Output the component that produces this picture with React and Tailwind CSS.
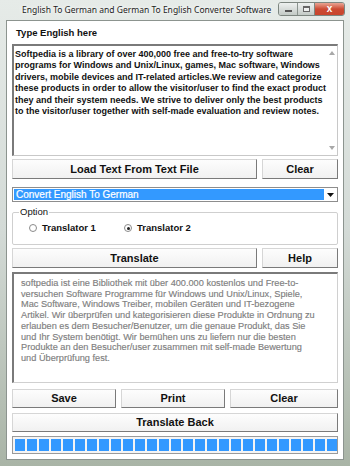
import React from 'react';

const inputLines = [
  'Softpedia is a library of over 400,000 free and free-to-try software',
  'programs for Windows and Unix/Linux, games, Mac software, Windows',
  'drivers, mobile devices and IT-related articles.We review and categorize',
  'these products in order to allow the visitor/user to find the exact product',
  'they and their system needs. We strive to deliver only the best products',
  'to the visitor/user together with self-made evaluation and review notes.',
];

const outputLines = [
  'softpedia ist eine Bibliothek mit über 400.000 kostenlos und Free-to-',
  'versuchen Software Programme für Windows und Unix/Linux, Spiele,',
  'Mac Software, Windows Treiber, mobilen Geräten und IT-bezogene',
  'Artikel. Wir überprüfen und kategorisieren diese Produkte in Ordnung zu',
  'erlauben es dem Besucher/Benutzer, um die genaue Produkt, das Sie',
  'und Ihr System benötigt. Wir bemühen uns zu liefern nur die besten',
  'Produkte an den Besucher/user zusammen mit self-made Bewertung',
  'und Überprüfung fest.',
];

function Btn({ children, className = '' }) {
  return (
    <div
      className={`flex items-center justify-center bg-gradient-to-b from-[#fdfdfd] to-[#f1f1f1] border border-t-[#d6d6d6] border-l-[#d6d6d6] border-b-[#7a7a7a] border-r-[#7a7a7a] text-[11px] font-bold text-[#111] ${className}`}
    >
      {children}
    </div>
  );
}

function Radio({ checked }) {
  return (
    <span className="w-[8px] h-[8px] rounded-full border border-[#8a8a8a] bg-white flex items-center justify-center">
      {checked && <span className="w-[3px] h-[3px] rounded-full bg-[#222]" />}
    </span>
  );
}

export default function App() {
  return (
    <div
      className="w-[350px] h-[466px] flex flex-col bg-gradient-to-b from-[#e6ebe8] via-[#d3dad6] to-[#a9b4a6] overflow-hidden"
      style={{ fontFamily: '"Liberation Sans", Arial, sans-serif' }}
    >
      {/* title bar */}
      <div className="h-[20px] flex items-center relative">
        <span
          className="ml-[22px] text-[8.5px] text-[#1c1c1c] whitespace-nowrap"
          style={{ fontFamily: '"Noto Sans", sans-serif', textShadow: '0 0 6px #fff, 0 0 3px #fff' }}
        >
          English To German and German To English Converter Software
        </span>
        <div className="absolute right-[5px] top-[2px] flex h-[14px] rounded-[3px] border border-[#7d8680] overflow-hidden">
          <div className="w-[19px] bg-gradient-to-b from-[#eef1f0] to-[#c3cac6] border-r border-[#8a938e] flex items-center justify-center">
            <span className="w-[7px] h-[2px] bg-white border border-[#555] mt-[4px]" />
          </div>
          <div className="w-[17px] bg-gradient-to-b from-[#eef1f0] to-[#c3cac6] border-r border-[#7d8680] flex items-center justify-center">
            <span className="w-[7px] h-[6px] border border-[#666] border-t-2 bg-white/60" />
          </div>
          <div className="w-[29px] bg-gradient-to-b from-[#e8a393] via-[#cc4a33] to-[#c8452d] flex items-center justify-center text-white text-[10px] font-bold leading-none">
            x
          </div>
        </div>
      </div>

      {/* client area */}
      <div className="mx-[6px] mb-[6px] flex-1 bg-white border border-[#8c948f] px-[5px] flex flex-col">
        <div className="h-[23px] flex items-center pl-[4px] pt-[1px] text-[9.5px] font-bold text-[#111]">
          Type English here
        </div>

        {/* input text area */}
        <div className="h-[112px] border border-t-[#7a7a7a] border-l-[#7a7a7a] border-b-[#c8c8c8] border-r-[#c8c8c8] border-l-2 border-t-2 flex">
          <div className="flex-1 pl-[1px] pt-[3px] text-[9px] font-bold leading-[11.4px] text-[#111] whitespace-nowrap">
            {inputLines.map((l) => (
              <div key={l}>{l}</div>
            ))}
          </div>
          <div className="w-[12px] flex flex-col items-center justify-between py-[5px]">
            <svg width="6" height="4" viewBox="0 0 6 4"><path d="M0 4 L3 0 L6 4 Z" fill="#a8a8a8" /></svg>
            <svg width="6" height="4" viewBox="0 0 6 4"><path d="M0 0 L3 4 L6 0 Z" fill="#a8a8a8" /></svg>
          </div>
        </div>

        <div className="flex gap-[5px] mt-[3px] h-[20px]">
          <Btn className="w-[245px]">Load Text From Text File</Btn>
          <Btn className="flex-1">Clear</Btn>
        </div>

        {/* combo box */}
        <div className="mt-[8px] h-[15px] flex border border-[#8d8d8d] bg-white p-[1px]">
          <div className="flex-1 bg-[#3399ff] text-white text-[10px] leading-[12px] pl-[2px]" style={{ WebkitTextStroke: '0.2px #fff' }}>
            Convert English To German
          </div>
          <div className="w-[12px] flex items-center justify-center">
            <svg width="7" height="4" viewBox="0 0 7 4"><path d="M0 0 L3.5 4 L7 0 Z" fill="#111" /></svg>
          </div>
        </div>

        {/* option group */}
        <fieldset className="mt-[5px] h-[38px] border border-[#cfcfcf] rounded-[2px] px-[5px] min-w-0">
          <legend className="text-[9.5px] text-[#111] px-[1px] ml-[1px] leading-[10px]">Option</legend>
          <div className="flex items-center h-[22px] text-[9.5px] font-bold text-[#111]">
            <div className="flex items-center gap-[5px] ml-[11px] w-[95px]">
              <Radio />
              <span>Translator 1</span>
            </div>
            <div className="flex items-center gap-[5px]">
              <Radio checked />
              <span>Translator 2</span>
            </div>
          </div>
        </fieldset>

        <div className="flex gap-[5px] mt-[3px] h-[20px]">
          <Btn className="w-[245px]">Translate</Btn>
          <Btn className="flex-1">Help</Btn>
        </div>

        {/* output text area */}
        <div
          className="mt-[4px] h-[111px] border border-t-[#7a7a7a] border-l-[#7a7a7a] border-b-[#d0d0d0] border-r-[#d0d0d0] border-l-2 border-t-2 pl-[7px] pt-[4px] text-[9.2px] leading-[10.7px] text-[#7e7e7e] whitespace-nowrap"
          style={{ WebkitTextStroke: '0.15px #7e7e7e' }}
        >
          {outputLines.map((l) => (
            <div key={l}>{l}</div>
          ))}
        </div>

        <div className="flex gap-[5px] mt-[6px] h-[19px]">
          <Btn className="w-[104px] text-[10.5px]">Save</Btn>
          <Btn className="w-[104px] text-[10.5px]">Print</Btn>
          <Btn className="flex-1 text-[10.5px]">Clear</Btn>
        </div>

        <Btn className="mt-[5px] h-[19px] text-[10.5px]">Translate Back</Btn>

        {/* progress bar */}
        <div className="mt-[4px] h-[18px] border border-[#9a9a9a] bg-[#f4f4f4] p-[2px] flex gap-[2px] overflow-hidden">
          {Array.from({ length: 27 }).map((_, i) => (
            <div key={i} className="w-[10px] shrink-0 bg-[#3399ff]" />
          ))}
        </div>
      </div>
    </div>
  );
}
